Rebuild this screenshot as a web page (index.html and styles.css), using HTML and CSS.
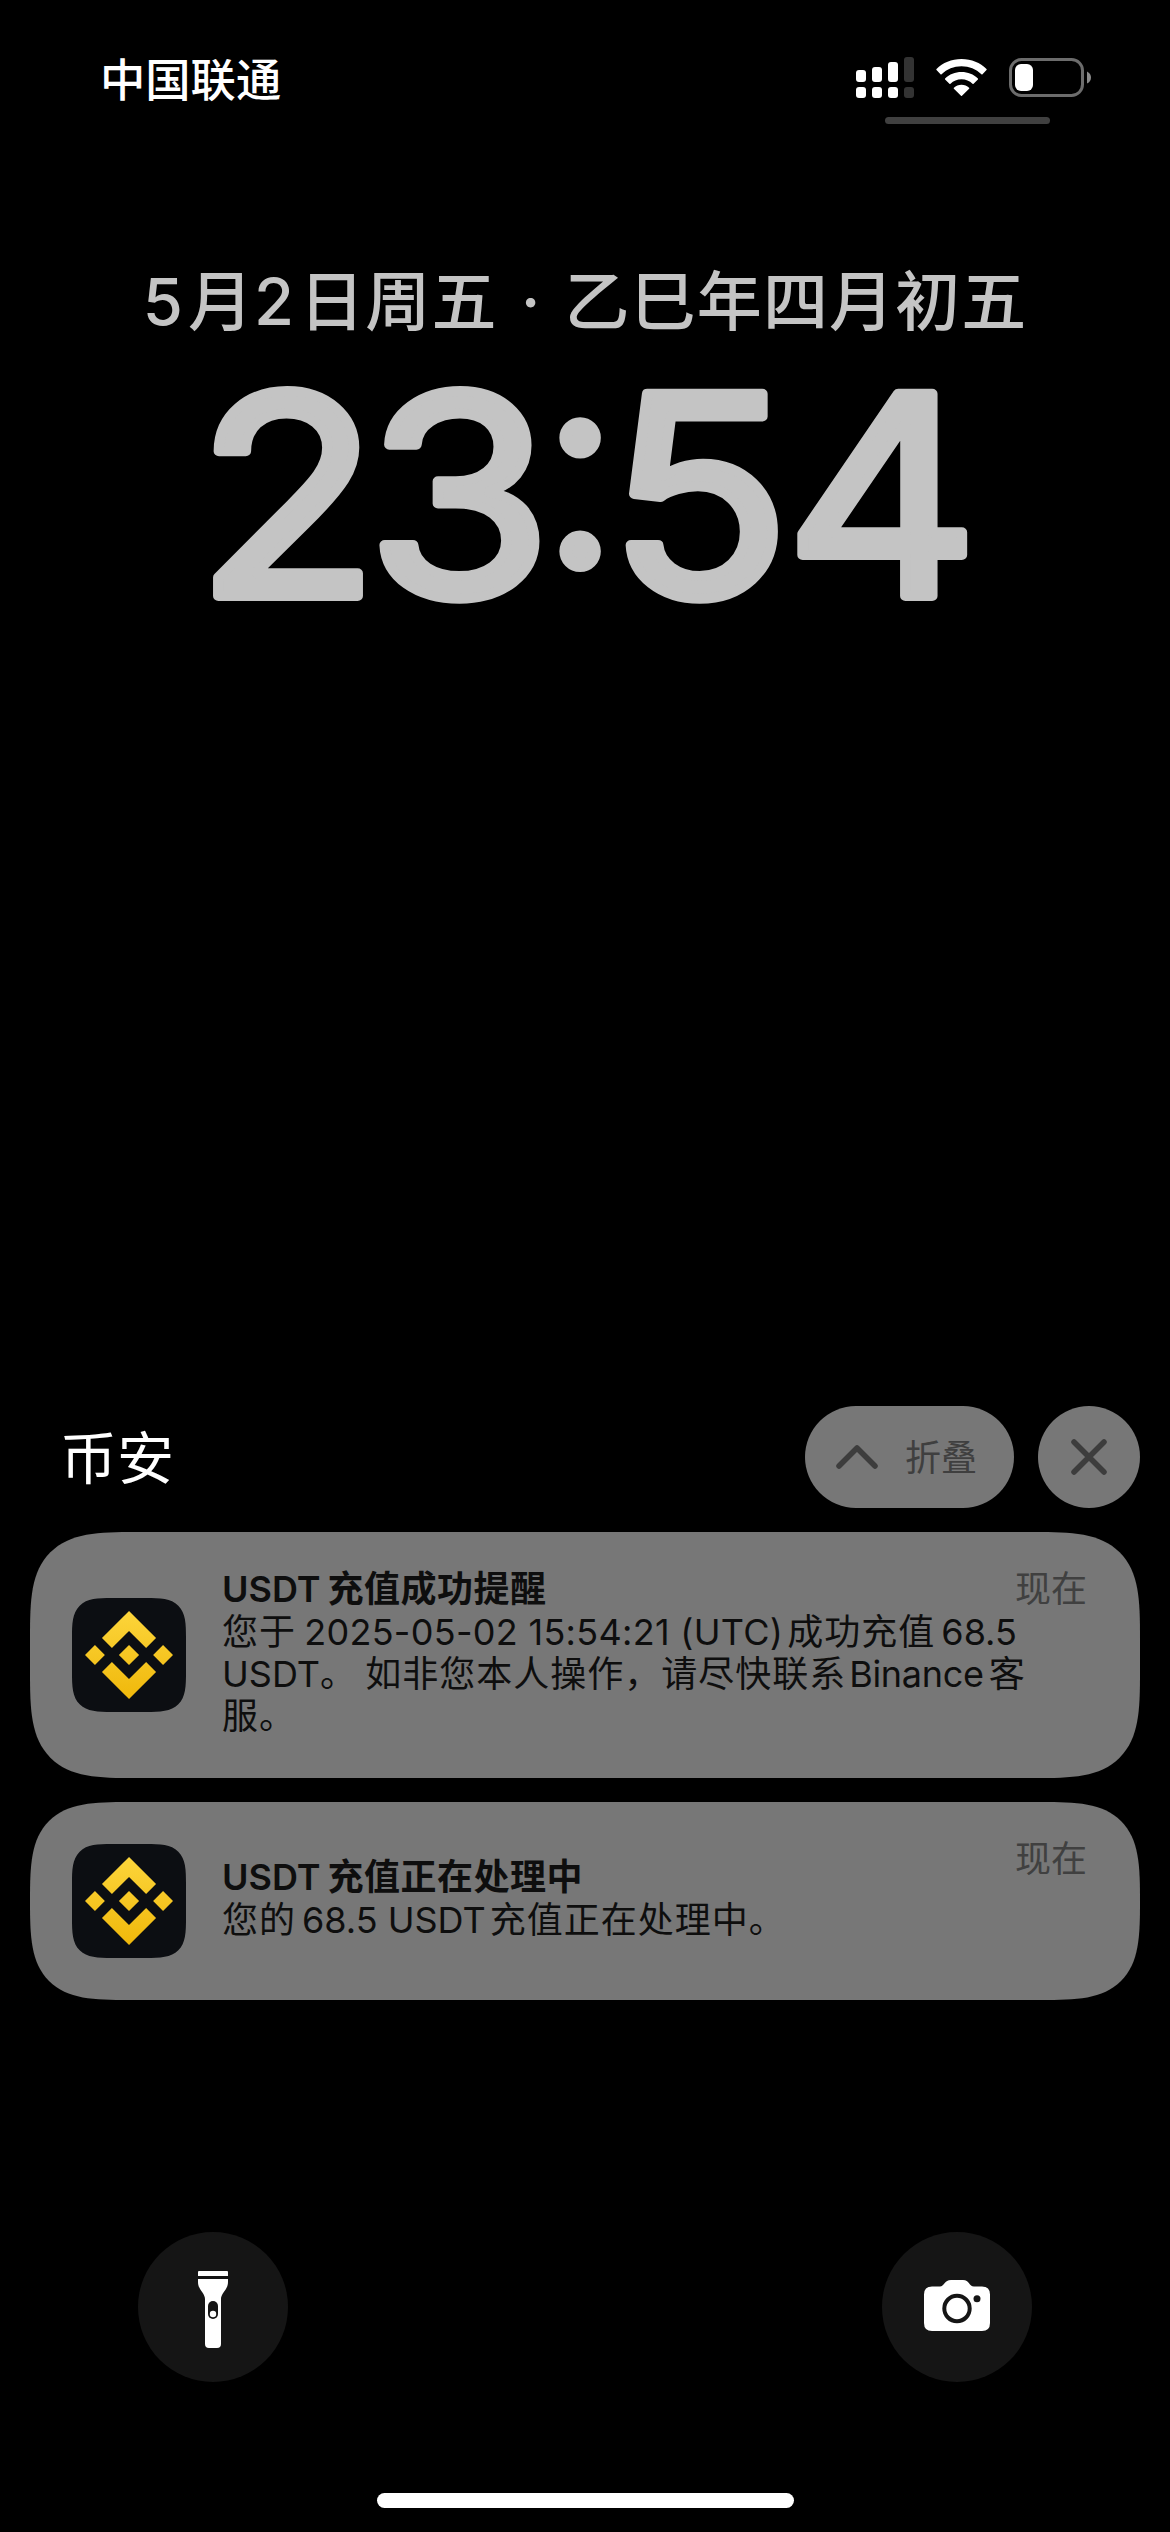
FILE: index.html
```html
<!DOCTYPE html>
<html lang="zh-CN">
<head>
<meta charset="utf-8">
<title>锁定屏幕</title>
<link rel="stylesheet" href="styles.css">
</head>
<body>
<svg class="defs" width="0" height="0" aria-hidden="true">
  <defs>
    <linearGradient id="gold" x1="0" y1="0" x2="0" y2="1">
      <stop offset="0" stop-color="#fcd53b"/>
      <stop offset="1" stop-color="#f0b80b"/>
    </linearGradient>
    <symbol id="binance" viewBox="0 0 126.61 126.61">
      <path fill="url(#gold)" d="m38.73 53.2 24.59-24.58 24.6 24.6 14.3-14.31-38.9-38.91-38.9 38.9zm-38.73 10.1 14.3-14.31 14.31 14.31-14.31 14.3zm38.73 10.1 24.59 24.59 24.6-24.6 14.31 14.29-38.9 38.91-38.91-38.88zm59.27-10.1 14.31-14.31 14.3 14.3-14.3 14.32zm-20.17 0-14.51-14.52-14.52 14.5 14.51 14.5z"/>
    </symbol>
  </defs>
</svg>
<main class="screen">
  <header class="status">
    <span class="carrier">中国联通</span>
    <div class="indicators">
      <div class="levels">
        <svg class="signal" width="58" height="41" viewBox="0 0 58 41" fill="#fff">
          <rect x="0" y="13" width="10" height="12" rx="3"/><rect x="16" y="10" width="10" height="15" rx="3"/><rect x="32" y="5" width="10" height="20" rx="3"/><rect x="48" y="0" width="10" height="25" rx="3" fill="#333"/>
          <rect x="0" y="30" width="10" height="11" rx="3"/><rect x="16" y="30" width="10" height="11" rx="3"/><rect x="32" y="30" width="10" height="11" rx="3"/><rect x="48" y="30" width="10" height="11" rx="3" fill="#333"/>
        </svg>
        <svg class="wifi" width="51" height="38" viewBox="0 0 51 38" fill="#fff">
          <path d="M25.500 0C35.500 0 44.300 3.800 50.500 10Q51 10.500 50.500 11L46.500 15.200Q46 15.700 45.400 15.200C40 10.200 33.200 7.300 25.500 7.300S11 10.200 5.600 15.200Q5 15.700 4.500 15.200L.5 11Q0 10.500.5 10C6.700 3.800 15.500 0 25.500 0Z"/>
          <path d="M25.500 13C31.900 13 37.600 15.400 41.900 19.400Q42.400 19.900 41.900 20.400L37.600 24.700Q37.100 25.200 36.500 24.700C33.600 22 29.800 20.300 25.500 20.300S17.400 22 14.500 24.700Q13.900 25.200 13.400 24.700L9.100 20.400Q8.600 19.900 9.100 19.400C13.400 15.400 19.100 13 25.500 13Z"/>
          <path d="M25.500 25.800C28.400 25.800 31.100 26.900 33.100 28.700Q33.600 29.200 33.100 29.700L26 36.800Q25.500 37.300 25 36.800L17.900 29.700Q17.400 29.200 17.900 28.700C19.900 26.900 22.600 25.800 25.500 25.800Z"/>
        </svg>
        <svg class="battery" width="82" height="39" viewBox="0 0 82 39">
          <rect x="1.500" y="1.500" width="72" height="36" rx="11" fill="none" stroke="#6c6c6c" stroke-width="3"/>
          <rect x="6" y="6" width="18" height="27" rx="6" fill="#fff"/>
          <path d="M78 13.500Q82 15.500 82 19.500T78 25.500Z" fill="#8a8a8a"/>
        </svg>
      </div>
      <div class="grabber"></div>
    </div>
  </header>

  <section class="clock">
    <p class="date"><span class="num">5</span>月<span class="num">2</span>日周五<span class="dot">·</span>乙巳年四月初五</p>
    <svg class="time" width="780" height="236" viewBox="0 0 780 236">
      <text class="digits" transform="scale(1.08 1)" x="0.8 158.8 382.3 546.4" y="216">2354</text>
      <text class="colon" x="347" y="184">:</text>
    </svg>
  </section>

  <section class="notices">
    <div class="group">
      <h1>币安</h1>
      <button class="collapse">
        <svg width="42" height="26" viewBox="0 0 42 26"><path d="M3 22 21 4 39 22"/></svg>
        <span>折叠</span>
      </button>
      <button class="close"><svg width="36" height="36" viewBox="0 0 36 36"><path d="M3 3 33 33M33 3 3 33"/></svg></button>
    </div>
    <article class="card tall">
      <div class="app"><svg width="88" height="88"><use href="#binance"/></svg></div>
      <div class="body">
        <h2><span class="latin">USDT</span>充值成功提醒</h2>
        <p>您于 <span class="latin stamp">2025-05-02 15:54:21 (UTC)</span>成功充值<span class="latin inner">68.5</span></p>
        <p><span class="latin end">USDT</span>。 如非您本人操作，请尽快联系<span class="latin brand">Binance</span>客</p>
        <p>服。</p>
      </div>
      <time>现在</time>
    </article>
    <article class="card short">
      <div class="app"><svg width="88" height="88"><use href="#binance"/></svg></div>
      <div class="body">
        <h2><span class="latin">USDT</span>充值正在处理中</h2>
        <p>您的<span class="latin inner">68.5 USDT</span>充值正在处理中。</p>
      </div>
      <time>现在</time>
    </article>
  </section>

  <nav class="shortcuts">
    <button class="round">
      <svg class="torch" width="30" height="77" viewBox="0 0 30 77">
        <path fill="#fff" d="M1 0H29Q30 0 30 1V5H0V1Q0 0 1 0ZM0 8H30V11C30 19 23 22 23 28V73Q23 77 19 77H11Q7 77 7 73V28C7 22 0 19 0 11Z"/>
        <rect x="10" y="30" width="10" height="18" rx="5" fill="#151515"/><circle cx="15" cy="43" r="3.200" fill="#fff"/>
      </svg>
    </button>
    <button class="round">
      <svg class="camera" width="66" height="51" viewBox="0 0 66 51">
        <path fill="#fff" d="M8 6.500H16C20 6.500 20.500 0 27 0H39C45.500 0 45 6.500 50 6.500H58Q66 6.500 66 14.500V43Q66 51 58 51H8Q0 51 0 43V14.500Q0 6.500 8 6.500Z"/>
        <circle cx="33" cy="28.500" r="12.700" fill="none" stroke="#151515" stroke-width="4"/><circle cx="53" cy="18.700" r="3.500" fill="#151515"/>
      </svg>
    </button>
  </nav>
  <div class="home"></div>
</main>
</body>
</html>
```

FILE: styles.css
```css
* { box-sizing: border-box; margin: 0; padding: 0; }
body { background: #000; font-family: Inter, "Noto Sans CJK SC", sans-serif; }
button { border: 0; font: inherit; color: inherit; }
svg { display: block; flex-shrink: 0; }
.defs { position: absolute; }
.screen { width: 1170px; height: 2532px; display: flex; flex-direction: column; background: #000; overflow: hidden; }

.status { height: 262px; padding: 57px 79px 0 100px; display: flex; justify-content: space-between; align-items: flex-start; }
.carrier { margin-top: 1px; font-size: 45.300px; line-height: 46px; font-weight: 500; color: #fff; }
.indicators { display: flex; flex-direction: column; }
.levels { display: flex; align-items: flex-start; height: 60px; }
.wifi { margin: 2px 0 0 22px; }
.battery { margin: 1px 0 0 22px; }
.grabber { width: 165px; height: 7px; margin-left: 29px; border-radius: 4px; background: #404040; }

.clock { height: 1144px; display: flex; flex-direction: column; align-items: center; color: #c4c4c4; }
.date { height: 118px; line-height: 80px; font-size: 65px; font-weight: 500; letter-spacing: 1.100px; white-space: nowrap; }
.date .num { font-size: 65px; margin-right: 4px; }
.date .dot { display: inline-block; width: 67px; text-align: center; }
.time { overflow: visible; }
.time text { font-family: Inter, sans-serif; fill: #c4c4c4; stroke: #c4c4c4; stroke-linejoin: round; }
.digits { font-size: 278px; font-weight: 400; stroke-width: 10px; }
.colon { font-size: 270px; font-weight: 300; stroke-width: 13px; }

.notices { height: 826px; padding: 0 30px; }
.group { height: 102px; display: flex; margin-bottom: 24px; }
.group h1 { flex: 1; padding-left: 30px; font-size: 57px; font-weight: 400; line-height: 105px; color: #fff; }
.collapse, .close, .card { background: #777; }
.collapse { width: 209px; height: 102px; margin-right: 24px; padding-left: 31px; border-radius: 51px; display: flex; align-items: center; gap: 27px; font-size: 36px; color: #3f3f3f; }
.collapse span { margin-top: -4px; }
.close { width: 102px; height: 102px; border-radius: 50%; display: flex; align-items: center; justify-content: center; }
.collapse path, .close path { fill: none; stroke: #3d3d3d; stroke-width: 5.500px; stroke-linecap: round; stroke-linejoin: round; }
.card { display: flex; align-items: center; padding: 0 53px 0 42px; border-radius: 72px; margin-bottom: 24px; color: #0e0e0e; }
.tall { height: 246px; }
.short { height: 198px; }
.app { flex-shrink: 0; width: 114px; height: 114px; border-radius: 27px; background: #0c0e12; display: flex; align-items: center; justify-content: center; }
.body { flex: 1; min-width: 0; margin: -6px 0 0 36px; font-size: 36px; line-height: 42px; white-space: nowrap; letter-spacing: 1px; word-spacing: -3px; }
.body h2 { font-size: 36px; line-height: 43px; font-weight: 600; letter-spacing: .5px; }
.latin { letter-spacing: 0; word-spacing: 0; margin-right: 7px; }
.stamp { letter-spacing: .3px; margin-right: 4px; }
.inner { margin-left: 6px; margin-right: 4px; }
.end { margin-right: 0; }
.brand { letter-spacing: -.3px; margin: 0 5px 0 3px; }
time { flex-shrink: 0; white-space: nowrap; align-self: flex-start; margin-top: 36px; font-size: 36px; line-height: 42px; color: #404040; }
@supports (corner-shape: squircle) {
  .card { border-radius: 106px; corner-shape: superellipse(1.7); }
  .short { border-radius: 99px; }
  .app { border-radius: 40px; corner-shape: superellipse(1.7); }
}

.shortcuts { display: flex; justify-content: space-between; padding: 0 138px; height: 261px; }
.round { width: 150px; height: 150px; border-radius: 50%; background: #151515; display: flex; align-items: center; justify-content: center; }
.torch { margin-top: 5px; }
.camera { margin-top: -3px; }
.home { width: 417px; height: 15px; margin-left: 377px; border-radius: 8px; background: #fff; }
```
